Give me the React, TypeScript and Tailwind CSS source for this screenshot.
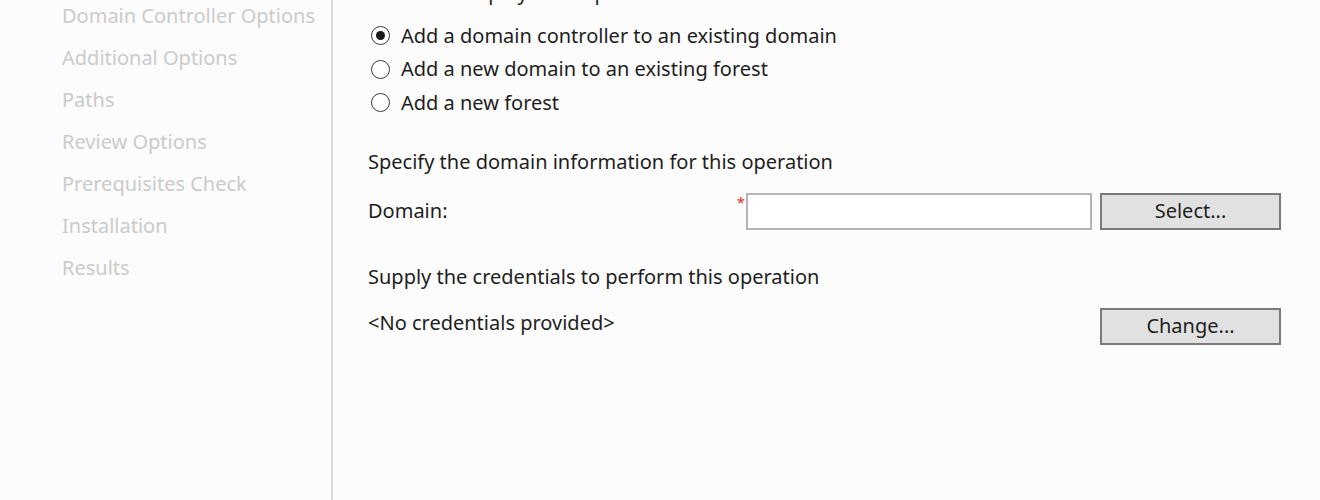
const navItems = [
  "Domain Controller Options",
  "Additional Options",
  "Paths",
  "Review Options",
  "Prerequisites Check",
  "Installation",
  "Results",
];

function Radio({ checked, label }: { checked?: boolean; label: string }) {
  return (
    <label className="flex items-center h-[33.5px]">
      <span className="w-[19px] h-[19px] rounded-full border-[1.5px] border-[#3a3a3a] bg-white flex items-center justify-center mr-[11px] shrink-0">
        {checked && <span className="w-[9px] h-[9px] rounded-full bg-[#1a1a1a]" />}
      </span>
      <span>{label}</span>
    </label>
  );
}

function WinButton({ children }: { children: React.ReactNode }) {
  return (
    <button
      type="button"
      className="w-[181px] h-[37px] bg-[#e1e1e1] border-2 border-[#7a7a7a] text-[#1e1e1e] shrink-0"
    >
      {children}
    </button>
  );
}

export default function App() {
  return (
    <div
      className="w-[1320px] h-[500px] bg-[#fcfcfc] flex overflow-hidden text-[20px] text-[#1e1e1e]"
      style={{ fontFamily: '"Noto Sans", "Open Sans", sans-serif' }}
    >
      {/* Steps */}
      <div className="w-[333px] shrink-0 pl-[62px] text-[#cbcbcb] border-r-2 border-[#dadada]">
        <div className="-mt-[5px]">
          {navItems.map((n) => (
            <div key={n} className="h-[42px] flex items-center whitespace-nowrap">
              {n}
            </div>
          ))}
        </div>
      </div>

      {/* Content */}
      <div className="flex-1 pl-[35px] pr-[39px]">
        <div className="-mt-[24px] h-[34px] flex items-center">Select the deployment operation</div>
        <div className="pl-[3px] mt-[9px]">
          <Radio checked label="Add a domain controller to an existing domain" />
          <Radio label="Add a new domain to an existing forest" />
          <Radio label="Add a new forest" />
        </div>

        <div className="mt-[27px] h-[30px] flex items-center">
          Specify the domain information for this operation
        </div>
        <div className="mt-[16px] flex items-center h-[37px]">
          <div className="flex-1">Domain:</div>
          <span className="text-[#e03030] text-[15px] self-start -mt-[2px] mr-[1px]">*</span>
          <input className="w-[346px] h-[37px] bg-white border-2 border-[#b4b4b4] outline-none mr-[8px]" />
          <WinButton>Select...</WinButton>
        </div>

        <div className="mt-[32px] h-[30px] flex items-center">
          Supply the credentials to perform this operation
        </div>
        <div className="mt-[16px] flex items-center h-[37px]">
          <div className="flex-1 -mt-[7px]">&lt;No credentials provided&gt;</div>
          <WinButton>Change...</WinButton>
        </div>
      </div>
    </div>
  );
}
